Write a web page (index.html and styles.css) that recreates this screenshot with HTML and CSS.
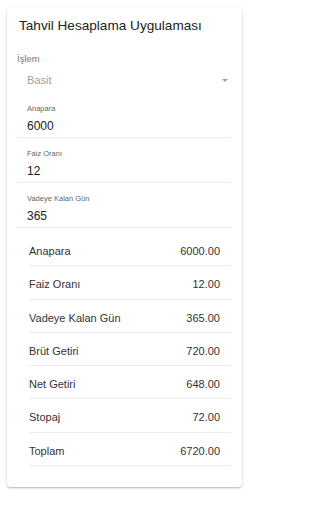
FILE: index.html
```html
<!DOCTYPE html>
<html lang="tr">
<head>
<meta charset="utf-8">
<title>Tahvil Hesaplama Uygulaması</title>
<link rel="stylesheet" href="styles.css">
</head>
<body>
<div class="card">
  <div class="title">Tahvil Hesaplama Uygulaması</div>
  <div class="select-label">İşlem</div>
  <div class="select">
    <span class="select-value">Basit</span>
    <span class="arrow"></span>
  </div>
  <div class="field">
    <div class="field-label">Anapara</div>
    <div class="field-value">6000</div>
  </div>
  <div class="field">
    <div class="field-label">Faiz Oranı</div>
    <div class="field-value">12</div>
  </div>
  <div class="field">
    <div class="field-label">Vadeye Kalan Gün</div>
    <div class="field-value">365</div>
  </div>
  <div class="rows">
    <div class="row"><span>Anapara</span><span>6000.00</span></div>
    <div class="row"><span>Faiz Oranı</span><span>12.00</span></div>
    <div class="row"><span>Vadeye Kalan Gün</span><span>365.00</span></div>
    <div class="row"><span>Brüt Getiri</span><span>720.00</span></div>
    <div class="row"><span>Net Getiri</span><span>648.00</span></div>
    <div class="row"><span>Stopaj</span><span>72.00</span></div>
    <div class="row"><span>Toplam</span><span>6720.00</span></div>
  </div>
</div>
</body>
</html>
```
FILE: styles.css
```css
html, body {
  margin: 0;
  padding: 0;
  background: #ffffff;
}
body {
  font-family: "Liberation Sans", Arial, sans-serif;
  color: #222222;
  padding: 7px;
}
.card {
  width: 235px;
  box-sizing: border-box;
  padding: 9px 11px 21px 10px;
  border-radius: 4px;
  background: #ffffff;
  box-shadow: 0 1px 3px rgba(0,0,0,0.2), 0 1px 1px rgba(0,0,0,0.12);
}
.title {
  font-size: 13.6px;
  line-height: 20px;
  padding-left: 2px;
  color: #212121;
}
.select-label {
  margin-top: 17px;
  font-size: 9.5px;
  line-height: 12px;
  color: #777777;
}
.select {
  margin-top: 7px;
  display: flex;
  align-items: center;
  justify-content: space-between;
  padding-left: 10px;
  padding-right: 3px;
  height: 16px;
}
.select-value {
  font-size: 11px;
  line-height: 16px;
  color: #a0a0a0;
}
.arrow {
  width: 0;
  height: 0;
  border-left: 3px solid transparent;
  border-right: 3px solid transparent;
  border-top: 3px solid #a0a0a0;
}
.field {
  padding: 11px 0 3px 10px;
  border-bottom: 1px solid #ececec;
}
.select + .field {
  margin-top: 5px;
}
.field-label {
  font-size: 7.5px;
  line-height: 10px;
  color: #666666;
}
.field-value {
  margin-top: 4px;
  font-size: 12px;
  line-height: 16px;
  color: #222222;
}
.rows {
  margin-top: 5px;
  margin-left: 12px;
}
.row {
  display: flex;
  justify-content: space-between;
  height: 33.29px;
  box-sizing: border-box;
  padding: 10px 11px 0 0;
  border-bottom: 1px solid #ececec;
  font-size: 11px;
  line-height: 16px;
  color: #333333;
}
```
